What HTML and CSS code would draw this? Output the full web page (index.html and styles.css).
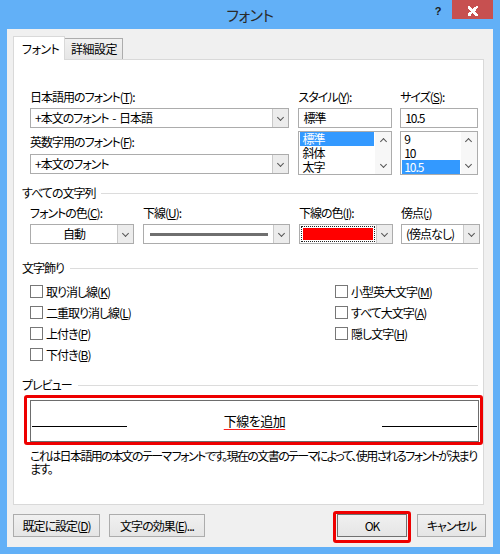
FILE: index.html
```html
<!DOCTYPE html>
<html lang="ja">
<head>
<meta charset="utf-8">
<title>フォント</title>
<link rel="stylesheet" href="styles.css">
</head>
<body>
<div class="window">
  <div class="titlebar">
    <div class="title">フォント</div>
    <div class="caption-btns">
      <span class="help">?</span>
      <span class="close"><span class="x"></span></span>
    </div>
  </div>
  <div class="client">
    <div class="tabs">
      <div class="tab active">フォント</div>
      <div class="tab">詳細設定</div>
    </div>
    <div class="panel">
      <div class="top">
        <div class="col col-font">
          <div class="lbl">日本語用のフォント(<u>T</u>):</div>
          <div class="combo"><span class="field">+本文のフォント - 日本語</span><span class="arrow"><span class="chev down"></span></span></div>
          <div class="lbl lbl2">英数字用のフォント(<u>F</u>):</div>
          <div class="combo"><span class="field">+本文のフォント</span><span class="arrow"><span class="chev down"></span></span></div>
        </div>
        <div class="col col-style">
          <div class="lbl">スタイル(<u>Y</u>):</div>
          <div class="textbox">標準</div>
          <div class="listbox">
            <div class="items">
              <div class="item sel">標準</div>
              <div class="item">斜体</div>
              <div class="item">太字</div>
            </div>
            <div class="scroll"><span class="chev up"></span><span class="chev down"></span></div>
          </div>
        </div>
        <div class="col col-size">
          <div class="lbl">サイズ(<u>S</u>):</div>
          <div class="textbox">10.5</div>
          <div class="listbox">
            <div class="items">
              <div class="item">9</div>
              <div class="item">10</div>
              <div class="item sel">10.5</div>
            </div>
            <div class="scroll"><span class="chev up"></span><span class="chev down"></span></div>
          </div>
        </div>
      </div>

      <div class="group-head g1"><span>すべての文字列</span><span class="rule"></span></div>
      <div class="row-combos">
        <div class="col">
          <div class="lbl">フォントの色(<u>C</u>):</div>
          <div class="combo"><span class="field center">自動</span><span class="arrow"><span class="chev down"></span></span></div>
        </div>
        <div class="col">
          <div class="lbl">下線(<u>U</u>):</div>
          <div class="combo"><span class="field"><span class="uline"></span></span><span class="arrow"><span class="chev down"></span></span></div>
        </div>
        <div class="col">
          <div class="lbl">下線の色(<u>I</u>):</div>
          <div class="combo"><span class="field focus"><span class="swatch"></span></span><span class="arrow"><span class="chev down"></span></span></div>
        </div>
        <div class="col">
          <div class="lbl">傍点(<u>:</u>)</div>
          <div class="combo"><span class="field">(傍点なし)</span><span class="arrow"><span class="chev down"></span></span></div>
        </div>
      </div>

      <div class="group-head g2"><span>文字飾り</span><span class="rule"></span></div>
      <div class="checks">
        <div class="check-col">
          <div class="check"><span class="box"></span>取り消し線(<u>K</u>)</div>
          <div class="check"><span class="box"></span>二重取り消し線(<u>L</u>)</div>
          <div class="check"><span class="box"></span>上付き(<u>P</u>)</div>
          <div class="check"><span class="box"></span>下付き(<u>B</u>)</div>
        </div>
        <div class="check-col">
          <div class="check"><span class="box"></span>小型英大文字(<u>M</u>)</div>
          <div class="check"><span class="box"></span>すべて大文字(<u>A</u>)</div>
          <div class="check"><span class="box"></span>隠し文字(<u>H</u>)</div>
        </div>
      </div>

      <div class="group-head g3"><span>プレビュー</span><span class="rule"></span></div>
      <div class="highlight preview-hl">
        <div class="preview">
          <span class="pline"></span>
          <span class="ptext">下線を追加</span>
          <span class="pline"></span>
        </div>
      </div>
      <div class="desc">これは日本語用の本文のテーマ&nbsp;フォントです。現在の文書のテーマによって、使用されるフォントが決まり<br>ます。</div>
    </div>

    <div class="buttons">
      <button class="btn b-default">既定に設定(<u>D</u>)</button>
      <button class="btn b-effect">文字の効果(<u>E</u>)...</button>
      <span class="spacer"></span>
      <div class="highlight ok-hl"><button class="btn b-ok">OK</button></div>
      <button class="btn b-cancel">キャンセル</button>
    </div>
  </div>
</div>
</body>
</html>
```

FILE: styles.css
```css
* { box-sizing: border-box; }
html, body { margin: 0; padding: 0; }
body {
  font-family: "Noto Sans CJK JP", "Noto Sans", sans-serif;
  font-size: 12px;
  line-height: 14px;
  color: #000;
  font-feature-settings: "palt";
  letter-spacing: -1px;
  word-spacing: 2px;
}
u { text-decoration: underline; text-underline-offset: 1px; }

.window {
  width: 500px;
  height: 554px;
  background: #62b0f7;
  display: flex;
  flex-direction: column;
}

/* title bar */
.titlebar {
  height: 29px;
  display: grid;
  grid-template-columns: 1fr auto 1fr;
  align-items: start;
}
.title {
  grid-column: 2;
  font-size: 15px;
  line-height: 30px;
  color: #2a2a2a;
  letter-spacing: -0.5px;
}
.caption-btns {
  grid-column: 3;
  justify-self: end;
  display: flex;
  align-items: flex-start;
  margin-right: 7px;
}
.help {
  width: 14px;
  margin-right: 7px;
  font-family: "Liberation Sans", sans-serif;
  font-weight: bold;
  font-size: 11px;
  line-height: 22px;
  color: #1a1a1a;
  text-align: center;
  letter-spacing: 0;
}
.close {
  width: 41px;
  height: 19px;
  background: #c75050;
  display: flex;
  align-items: center;
  justify-content: center;
  padding-top: 2px;
}
.x {
  width: 10px;
  height: 10px;
  background:
    linear-gradient(45deg, transparent 40%, #fff 40%, #fff 60%, transparent 60%),
    linear-gradient(-45deg, transparent 40%, #fff 40%, #fff 60%, transparent 60%);
}

/* client */
.client {
  flex: 1;
  margin: 0 7px 7px 7px;
  background: #f0f0f0;
  padding: 7px 9px 0 6px;
  display: flex;
  flex-direction: column;
}

.tabs {
  display: flex;
  align-items: flex-end;
  height: 23px;
  position: relative;
  z-index: 1;
}
.tab {
  height: 21px;
  width: 58px;
  border: 1px solid #acacac;
  border-bottom: none;
  border-left: none;
  background: linear-gradient(#f0f0f0, #e6e6e6);
  padding-left: 6px;
  line-height: 20px;
  letter-spacing: -0.5px;
}
.tab.active {
  width: 52px;
  height: 24px;
  margin-bottom: -1px;
  border: 1px solid #d9d9d9;
  border-bottom: none;
  background: #fff;
  padding-left: 8px;
  line-height: 23px;
}

.panel {
  width: 471px;
  height: 446px;
  background: #fff;
  border: 1px solid #d9d9d9;
  padding: 30px 5px 0 8px;
  display: flex;
  flex-direction: column;
}

.lbl { height: 14px; line-height: 14px; white-space: nowrap; }

/* top area */
.top {
  display: flex;
  margin-left: 8px;
}
.col { display: flex; flex-direction: column; }
.col-font { width: 260px; margin-right: 9px; }
.col-style { width: 94px; margin-right: 8px; }
.col-size { width: 78px; }
.col .lbl { margin-bottom: 4px; }
.col-font .lbl2 { margin-top: 7px; margin-bottom: 5px; }

.combo {
  display: flex;
  height: 20px;
  border: 1px solid #acacac;
  background: #fff;
}
.field {
  flex: 1;
  padding-left: 4px;
  line-height: 18px;
  white-space: nowrap;
  overflow: hidden;
  display: flex;
  align-items: center;
}
.field.center { justify-content: center; padding-left: 0; }
.arrow {
  width: 16px;
  background: #ececec;
  border-left: 1px solid #c9c9c9;
  display: flex;
  align-items: center;
  justify-content: center;
}
.chev {
  display: block;
  width: 5px;
  height: 5px;
  border-right: 1.5px solid #555;
  border-bottom: 1.5px solid #555;
}
.chev.down { transform: translateY(-1px) rotate(45deg); }
.chev.up { transform: translateY(1px) rotate(-135deg); }

.textbox {
  height: 20px;
  border: 1px solid #acacac;
  background: #fff;
  padding-left: 4px;
  line-height: 18px;
  margin-bottom: 3px;
}
.listbox {
  height: 44px;
  border: 1px solid #acacac;
  background: #fff;
  display: flex;
}
.items { flex: 1; padding: 0 1px; }
.item { height: 14px; line-height: 14px; padding-left: 2px; }
.item.sel { background: #3399ff; color: #fff; }
.scroll {
  width: 16px;
  background: #f7f7f7;
  display: flex;
  flex-direction: column;
  align-items: center;
  justify-content: space-between;
  padding: 6px 0 6px;
}

/* group headings */
.group-head {
  display: flex;
  align-items: center;
  height: 14px;
  white-space: nowrap;
}
.group-head .rule {
  flex: 1;
  height: 1px;
  background: #dcdcdc;
  margin-left: 6px;
}
.g1 { margin-top: 11px; }
.g2 { margin-top: 17px; }
.g3 { margin-top: 13px; }

.row-combos {
  display: grid;
  grid-template-columns: 104px 147px 94px 78px;
  column-gap: 9px;
  margin-left: 8px;
  margin-top: 6px;
}
.row-combos .col:nth-child(4) { margin-left: -1px; }
.uline {
  display: block;
  width: 118px;
  height: 3px;
  background: #6f6f6f;
  margin-left: 2px;
}
.field.focus { padding: 1px; }
.swatch {
  display: block;
  width: 100%;
  height: 100%;
  outline: 1px dotted #222;
  outline-offset: -1px;
  border: 2px solid #fff;
  background: #ff0000;
}

/* checkboxes */
.checks {
  display: grid;
  grid-template-columns: 305px auto;
  margin-left: 8px;
  margin-top: 6px;
}
.check {
  height: 21px;
  display: flex;
  align-items: center;
  white-space: nowrap;
}
.box {
  width: 13px;
  height: 13px;
  border: 1px solid #777;
  background: #fff;
  margin-right: 3px;
}

/* preview */
.highlight {
  border: 3px solid #ee0000;
  border-radius: 3px;
}
.preview-hl {
  margin: 3px -5px 0 2px;
  padding: 2px 1px 0 3px;
}
.preview {
  height: 42px;
  border: 1px solid #6d6d6d;
  display: flex;
  align-items: center;
  justify-content: space-between;
  padding: 0 1px;
}
.pline {
  width: 95px;
  height: 1px;
  background: #000;
  margin-top: 10px;
}
.ptext {
  font-size: 13px;
  line-height: 16px;
  letter-spacing: -0.5px;
  text-decoration-line: underline;
  text-decoration-color: #ff2020;
  text-decoration-thickness: 1px;
  text-underline-offset: 3px;
}
.desc {
  margin: 4px 0 0 8px;
  line-height: 13px;
  white-space: nowrap;
  letter-spacing: -1.6px;
  word-spacing: 0;
}

/* buttons */
.buttons {
  display: flex;
  align-items: flex-start;
  margin-top: 9px;
  margin-right: -2px;
}
.btn {
  font: inherit;
  letter-spacing: inherit;
  font-feature-settings: "palt";
  color: #000;
  height: 23px;
  border: 1px solid #acacac;
  background: linear-gradient(#f0f0f0, #e5e5e5);
  padding: 0;
  line-height: 20px;
  text-align: center;
}
.b-default { width: 87px; margin-right: 9px; }
.b-effect { width: 96px; }
.spacer { flex: 1; }
.ok-hl {
  margin-top: -3px;
  padding: 0 1px 3px 1px;
  margin-right: 6px;
}
.b-ok { width: 70px; display: block; border-color: #707070; }
.b-cancel { width: 69px; }
```
